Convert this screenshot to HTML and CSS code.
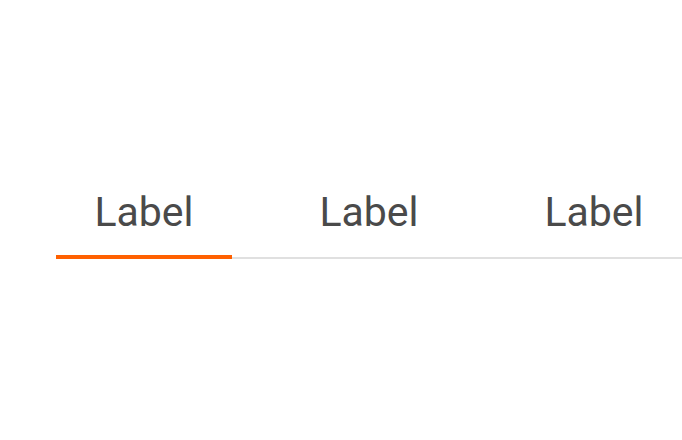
FILE: index.html
```html
<!DOCTYPE html>
<html>
<head>
<meta charset="utf-8">
<link rel="stylesheet" href="styles.css">
</head>
<body>
<div class="tabs">
  <div class="tab active">Label</div>
  <div class="tab">Label</div>
  <div class="tab">Label</div>
</div>
</body>
</html>
```
FILE: styles.css
```css
html, body {
  margin: 0;
  padding: 0;
  background: #ffffff;
}
body {
  width: 682px;
  height: 440px;
  overflow: hidden;
}
.tabs {
  display: flex;
  gap: 49px;
  margin: 188px 0 0 56px;
  border-bottom: 2px solid #e0e0e0;
}
.tab {
  flex: 0 0 176px;
  text-align: center;
  font-family: Roboto, "Noto Sans", sans-serif;
  font-size: 41px;
  line-height: 48px;
  color: #4a4a4a;
  padding-bottom: 19px;
  border-bottom: 4px solid transparent;
  margin-bottom: -2px;
}
.tab.active {
  border-bottom-color: #ff6000;
}
```
